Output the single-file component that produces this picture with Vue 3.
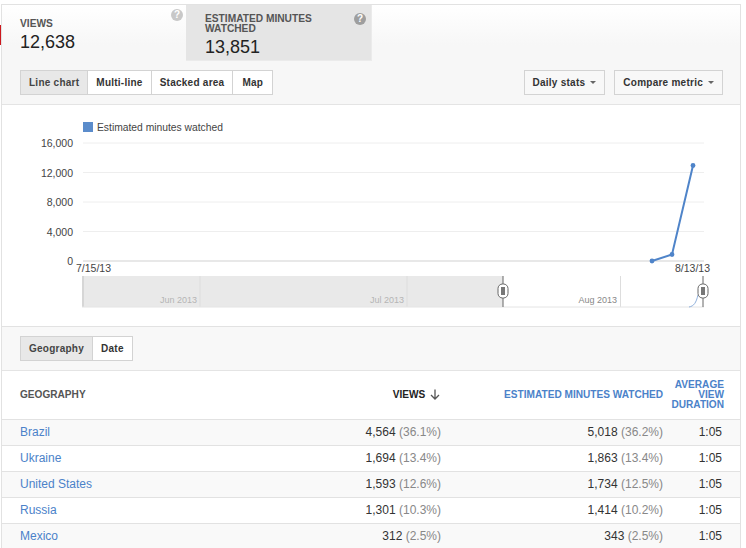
<script setup>
const yTicks = [
  { label: '16,000', y: 143 },
  { label: '12,000', y: 172.5 },
  { label: '8,000', y: 202 },
  { label: '4,000', y: 231.5 }
]

const rows = [
  { name: 'Brazil', views: '4,564', viewsPct: '(36.1%)', mins: '5,018', minsPct: '(36.2%)', dur: '1:05' },
  { name: 'Ukraine', views: '1,694', viewsPct: '(13.4%)', mins: '1,863', minsPct: '(13.4%)', dur: '1:05' },
  { name: 'United States', views: '1,593', viewsPct: '(12.6%)', mins: '1,734', minsPct: '(12.5%)', dur: '1:05' },
  { name: 'Russia', views: '1,301', viewsPct: '(10.3%)', mins: '1,414', minsPct: '(10.2%)', dur: '1:05' },
  { name: 'Mexico', views: '312', viewsPct: '(2.5%)', mins: '343', minsPct: '(2.5%)', dur: '1:05' }
]

const points = [[652, 261], [672, 254.5], [693, 165.5]]
const handles = [503, 703]
</script>

<template>
  <div class="page">
    <span class="red-mark"></span>
    <div class="panel">
      <section class="top">
        <div class="metrics">
          <div class="metric">
            <div class="metric-label">VIEWS</div>
            <div class="metric-value">12,638</div>
            <span class="help help-a">?</span>
          </div>
          <div class="metric active">
            <div class="metric-label">ESTIMATED MINUTES WATCHED</div>
            <div class="metric-value">13,851</div>
            <span class="help help-b">?</span>
          </div>
        </div>
        <div class="toolbar">
          <div class="tabs">
            <button class="on">Line chart</button>
            <button>Multi-line</button>
            <button>Stacked area</button>
            <button class="wide">Map</button>
          </div>
          <div class="menus">
            <button class="menu">Daily stats <i class="caret"></i></button>
            <button class="menu">Compare metric <i class="caret"></i></button>
          </div>
        </div>
      </section>

      <svg class="chart" width="738" height="221" viewBox="2 105 738 221">
        <rect x="83" y="122" width="10" height="10" fill="#5b8ccb" />
        <text x="97" y="130.5" class="t-legend">Estimated minutes watched</text>

        <g v-for="t in yTicks" :key="t.label">
          <line x1="83" x2="704" :y1="t.y" :y2="t.y" stroke="#eeeeee" />
          <text x="73" :y="t.y + 4" text-anchor="end" class="t-axis">{{ t.label }}</text>
        </g>
        <line x1="83" x2="704" y1="261" y2="261" stroke="#e8e8e8" stroke-width="2" />
        <text x="73" y="265" text-anchor="end" class="t-axis">0</text>
        <text x="76" y="272" class="t-axis">7/15/13</text>
        <text x="675" y="272" class="t-axis">8/13/13</text>

        <polyline points="652,261 672,254.5 693,165.5" fill="none" stroke="#4f84c9" stroke-width="2" />
        <circle v-for="p in points" :key="p[0]" :cx="p[0]" :cy="p[1]" r="2.4" fill="#4f84c9" />

        <rect x="82" y="276" width="421" height="31" fill="#e9e9e9" />
        <line x1="83" x2="83" y1="276" y2="307" stroke="#cfcfcf" stroke-width="1.5" />
        <line x1="200" x2="200" y1="276" y2="307" stroke="#dddddd" />
        <line x1="407" x2="407" y1="276" y2="307" stroke="#dddddd" />
        <line x1="620.5" x2="620.5" y1="276" y2="307" stroke="#dddddd" />
        <line x1="82" x2="704" y1="307" y2="307" stroke="#e4e4e4" />
        <text x="197" y="303" text-anchor="end" class="t-nav">Jun 2013</text>
        <text x="404" y="303" text-anchor="end" class="t-nav">Jul 2013</text>
        <text x="617" y="303" text-anchor="end" class="t-nav-dark">Aug 2013</text>
        <path d="M689 307 C694 306 696 303 698 295" fill="none" stroke="#8fb0dc" />

        <g v-for="x in handles" :key="x">
          <line :x1="x" :x2="x" y1="276" y2="307" stroke="#666666" />
          <rect :x="x - 5" y="284" width="10" height="14" rx="4.5" fill="#ffffff" stroke="#666666" />
          <rect :x="x - 2" y="287" width="4" height="8" fill="#777777" />
        </g>
      </svg>

      <section class="dim">
        <div class="tabs">
          <button class="on">Geography</button>
          <button>Date</button>
        </div>
      </section>

      <div class="table">
        <div class="row head">
          <div class="c-name">GEOGRAPHY</div>
          <div class="c-views dark">
            VIEWS
            <svg class="arrow" width="10" height="11" viewBox="0 0 10 11">
              <path d="M5 0.5V10M1 6l4 4 4-4" fill="none" stroke="#555555" stroke-width="1.3" />
            </svg>
          </div>
          <div class="c-mins blue">ESTIMATED MINUTES WATCHED</div>
          <div class="c-dur blue">AVERAGE VIEW DURATION</div>
        </div>
        <div v-for="r in rows" :key="r.name" class="row item">
          <div class="c-name"><a>{{ r.name }}</a></div>
          <div class="c-views">{{ r.views }} <span class="pct">{{ r.viewsPct }}</span></div>
          <div class="c-mins">{{ r.mins }} <span class="pct">{{ r.minsPct }}</span></div>
          <div class="c-dur">{{ r.dur }}</div>
        </div>
      </div>
    </div>
  </div>
</template>

<style>
html, body {
  background: #fff;
  overflow: hidden;
}
</style>

<style scoped>
.page {
  position: relative;
  width: 746px;
  height: 548px;
  overflow: hidden;
  padding: 4px 0 0 1px;
  box-sizing: border-box;
  font-family: "Liberation Sans", Arial, sans-serif;
  color: #222;
}
.red-mark {
  position: absolute;
  left: 0;
  top: 25px;
  width: 1px;
  height: 20px;
  background: #cc181e;
}
.panel {
  width: 740px;
  box-sizing: border-box;
  border-top: 1px solid #e2e2e2;
  border-left: 1px solid #e2e2e2;
  border-right: 1px solid #e2e2e2;
}
.top {
  height: 100px;
  box-sizing: border-box;
  border-bottom: 1px solid #e4e4e4;
  background: linear-gradient(#fff, #f7f7f7 40px);
}
.metrics {
  display: flex;
  height: 56px;
  padding-left: 18px;
}
.metric {
  position: relative;
  box-sizing: border-box;
  width: 164px;
  padding-top: 14px;
}
.metric.active {
  width: 186px;
  margin-left: 2px;
  padding: 9px 0 0 19px;
  background: #e5e5e5;
  border-right: 1px solid #ebebeb;
  border-bottom: 1px solid #ebebeb;
}
.metric-label {
  font-size: 10.2px;
  line-height: 10px;
  font-weight: bold;
  color: #555;
  width: 125px;
}
.metric-value {
  font-size: 18px;
  line-height: 21px;
  margin-top: 3px;
  color: #222;
}
.help {
  position: absolute;
  width: 12px;
  height: 12px;
  border-radius: 50%;
  background: #bbb;
  color: #fff;
  font-size: 10px;
  font-weight: bold;
  line-height: 12px;
  text-align: center;
}
.help-a {
  left: 151px;
  top: 4px;
  background: #c8c8c8;
}
.help-b {
  left: 168px;
  top: 8px;
  background: #9e9e9e;
}
.toolbar {
  display: flex;
  justify-content: space-between;
  align-items: flex-start;
  padding: 9px 17px 0 18px;
}
.tabs {
  display: inline-flex;
}
button {
  height: 25px;
  padding: 0 8px;
  box-sizing: border-box;
  border: 1px solid #d3d3d3;
  background: #fff;
  font-family: "Liberation Sans", Arial, sans-serif;
  font-size: 10px;
  font-weight: bold;
  letter-spacing: 0.25px;
  color: #333;
  white-space: nowrap;
}
button.wide {
  padding: 0 9px;
}
.tabs button + button {
  margin-left: -1px;
}
.tabs button.on {
  background: #e8e8e8;
  color: #444;
}
.menus {
  display: flex;
  gap: 9px;
}
.menu {
  background: #f8f8f8;
}
.caret {
  display: inline-block;
  margin-left: 2px;
  vertical-align: 2px;
  border-left: 3px solid transparent;
  border-right: 3px solid transparent;
  border-top: 3px solid #666;
}
.chart {
  display: block;
}
.t-legend {
  font-size: 10.3px;
  fill: #444;
}
.t-axis {
  font-size: 10.5px;
  fill: #444;
}
.t-nav {
  font-size: 9px;
  fill: #b5b5b5;
}
.t-nav-dark {
  font-size: 9px;
  fill: #888;
}
.dim {
  height: 45px;
  box-sizing: border-box;
  padding: 9px 18px 0;
  border-top: 1px solid #e2e2e2;
  border-bottom: 1px solid #e4e4e4;
  background: #f8f8f8;
}
.row {
  display: grid;
  grid-template-columns: 239px 182px 222px 59px;
  padding-left: 18px;
  box-sizing: border-box;
  align-items: center;
  border-bottom: 1px solid #e2e2e2;
}
.head {
  height: 49px;
  padding-bottom: 1px;
  font-size: 10.1px;
  font-weight: bold;
  line-height: 10px;
  background: #fff;
  color: #555;
}
.item {
  height: 26px;
  padding-bottom: 2px;
  font-size: 12px;
  color: #333;
}
.item:nth-child(even) {
  background: #f9f9f9;
}
.c-views, .c-mins, .c-dur {
  text-align: right;
}
.c-views.dark {
  color: #222;
  padding-right: 1px;
}
.arrow {
  margin-left: 2px;
  vertical-align: -2px;
}
.blue {
  color: #4b82c9;
  white-space: nowrap;
}
.c-dur.blue {
  white-space: normal;
  margin-left: -4px;
  margin-right: -2px;
}
a {
  color: #4b82c9;
}
.pct {
  color: #888;
}
</style>
